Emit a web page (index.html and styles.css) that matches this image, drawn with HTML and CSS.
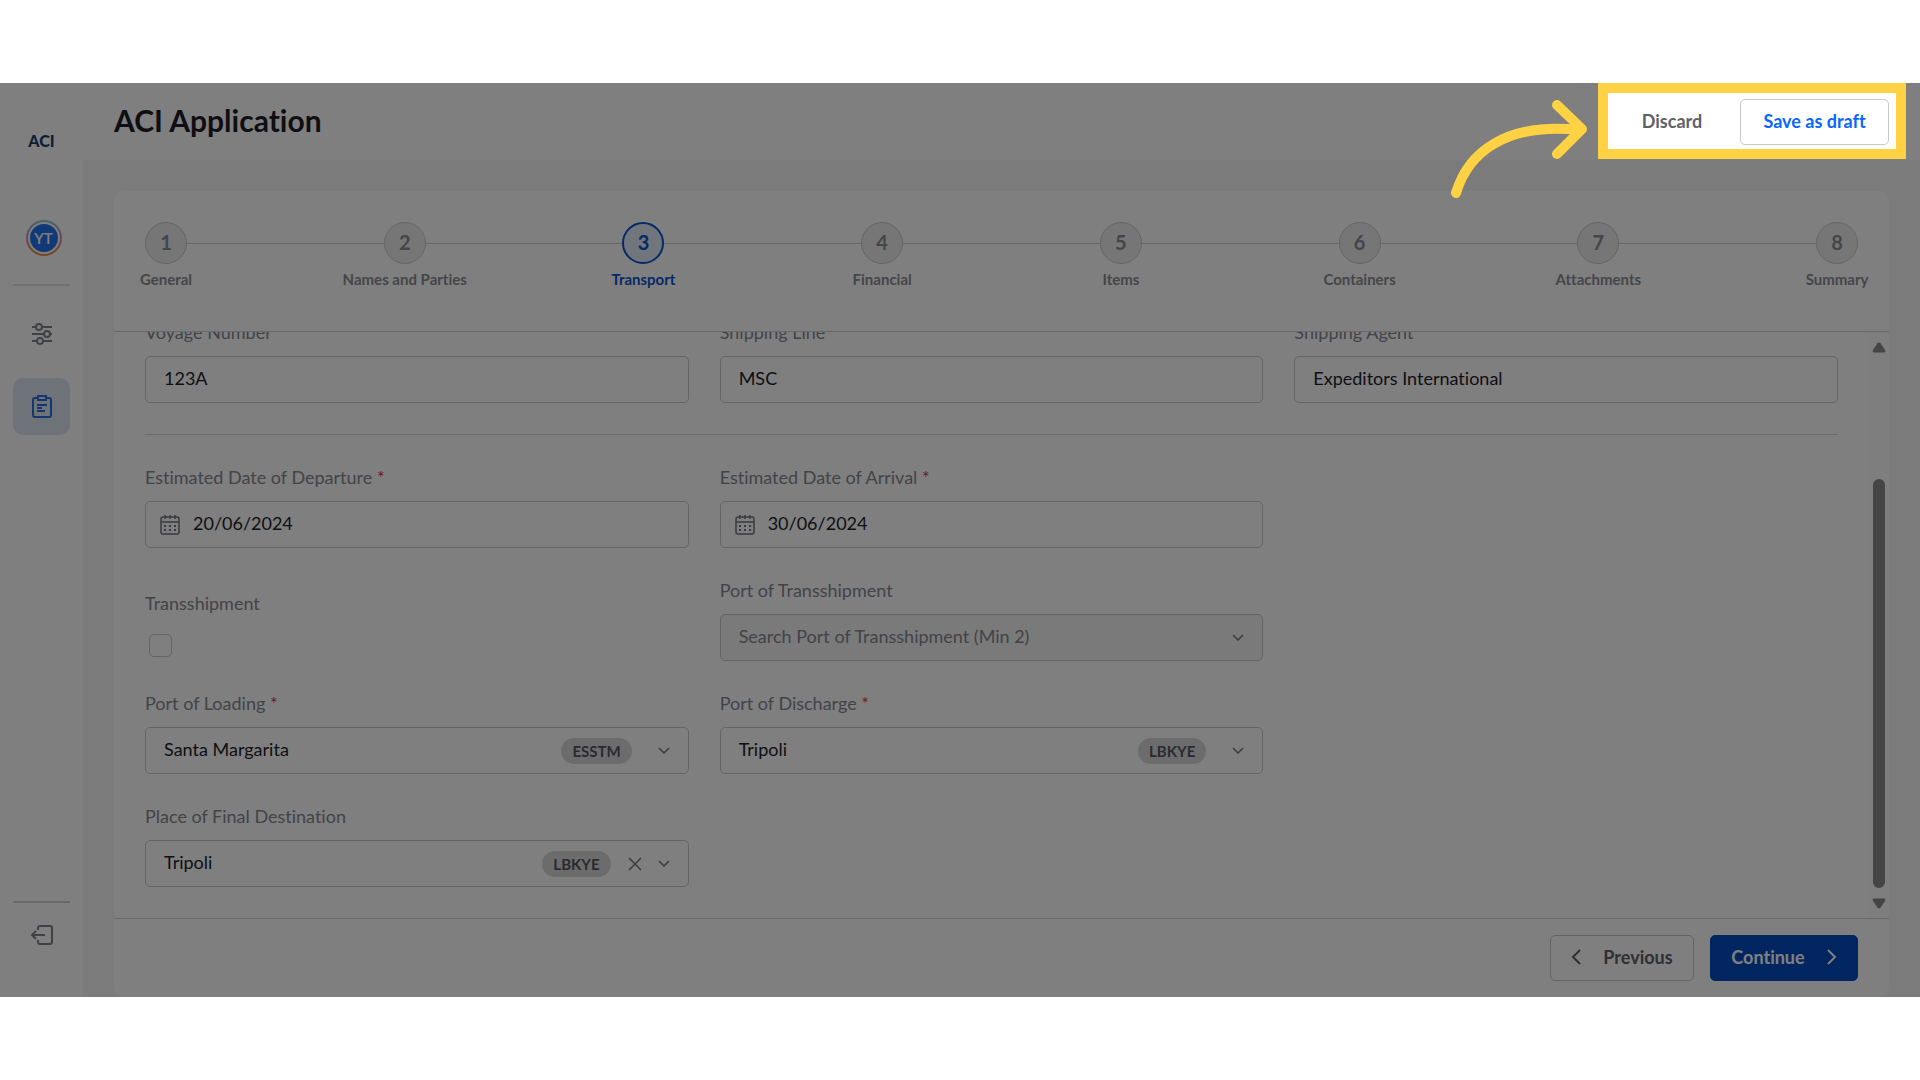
FILE: index.html
```
<!DOCTYPE html>
<html lang="en">
<head>
    <meta charset="utf-8">
    <title>ACI Application</title>
    <link rel="stylesheet" href="styles.css">
</head>
<body>
    <div class="app">
        <aside class="sidebar">
            <div class="logo">ACI</div>
            <button class="avatar" type="button"><span>YT</span></button>
            <hr class="side-line">
            <nav class="side-nav">
                <a href="#" class="side-link" aria-label="Settings">
                    <svg width="22" height="22" viewBox="0 0 22 22" fill="none" stroke="currentColor" stroke-width="2">
                        <path d="M1 4h4M11 4h10M1 11h12M19 11h2M1 18h5M12 18h9"/>
                        <circle cx="8" cy="4" r="3"/><circle cx="16" cy="11" r="3"/><circle cx="9" cy="18" r="3"/>
                    </svg>
                </a>
                <a href="#" class="side-link active" aria-label="Applications">
                    <svg width="20" height="24" viewBox="0 0 20 24" fill="none" stroke="currentColor" stroke-width="2">
                        <path d="M6 3H3a2 2 0 0 0-2 2v15a2 2 0 0 0 2 2h14a2 2 0 0 0 2-2V5a2 2 0 0 0-2-2h-3"/>
                        <path d="M6 1h8v4H6zM5 10h10M5 13h5M5 16h8"/>
                    </svg>
                </a>
            </nav>
            <hr class="side-line side-bottom">
            <a href="#" class="side-link logout" aria-label="Log out">
                <svg width="24" height="20" viewBox="0 0 24 20" fill="none" stroke="currentColor" stroke-width="2">
                    <path d="M8 5V3a2 2 0 0 1 2-2h10a2 2 0 0 1 2 2v14a2 2 0 0 1-2 2H10a2 2 0 0 1-2-2v-2"/>
                    <path d="M15 10H2M6 6l-4 4 4 4"/>
                </svg>
            </a>
        </aside>

        <main class="main">
            <header class="header">
                <h1>ACI Application</h1>
                <div class="header-actions">
                    <svg class="arrow" width="138" height="102" viewBox="0 0 138 102" fill="none" stroke="currentColor" stroke-width="10" stroke-linecap="round" stroke-linejoin="round">
                        <path d="M6 95C18 55 55 24 130 32"/>
                        <path d="M107 7l25 24-25 25"/>
                    </svg>
                    <button class="btn btn-text" type="button">Discard</button>
                    <button class="btn btn-draft" type="button">Save as draft</button>
                </div>
            </header>

            <section class="card">
                <ol class="steps">
                    <li class="step"><span class="circle">1</span><span class="step-name">General</span></li>
                    <li class="step"><span class="circle">2</span><span class="step-name">Names and Parties</span></li>
                    <li class="step current"><span class="circle">3</span><span class="step-name">Transport</span></li>
                    <li class="step"><span class="circle">4</span><span class="step-name">Financial</span></li>
                    <li class="step"><span class="circle">5</span><span class="step-name">Items</span></li>
                    <li class="step"><span class="circle">6</span><span class="step-name">Containers</span></li>
                    <li class="step"><span class="circle">7</span><span class="step-name">Attachments</span></li>
                    <li class="step"><span class="circle">8</span><span class="step-name">Summary</span></li>
                </ol>

                <div class="card-body">
                    <form class="form">
                        <div class="grid">
                            <div class="field">
                                <label for="voyage">Voyage Number</label>
                                <div class="control"><input id="voyage" type="text" value="123A"></div>
                            </div>
                            <div class="field">
                                <label for="line">Shipping Line</label>
                                <div class="control"><input id="line" type="text" value="MSC"></div>
                            </div>
                            <div class="field">
                                <label for="agent">Shipping Agent</label>
                                <div class="control"><input id="agent" type="text" value="Expeditors International"></div>
                            </div>
                        </div>

                        <hr class="form-line">

                        <div class="grid">
                            <div class="field">
                                <label for="etd">Estimated Date of Departure <b>*</b></label>
                                <div class="control control-date">
                                    <svg class="calendar" width="20" height="20" viewBox="0 0 20 20" fill="none" stroke="currentColor" stroke-width="1.5">
                                        <rect x="1" y="2" width="18" height="17" rx="2"/>
                                        <path d="M1 7h18M5 0v4M10 0v4M15 0v4"/>
                                        <path d="M4 11h12M4 15h12" stroke-width="2" stroke-dasharray="2 3"/>
                                    </svg>
                                    <input id="etd" type="text" value="20/06/2024">
                                </div>
                            </div>
                            <div class="field">
                                <label for="eta">Estimated Date of Arrival <b>*</b></label>
                                <div class="control control-date">
                                    <svg class="calendar" width="20" height="20" viewBox="0 0 20 20" fill="none" stroke="currentColor" stroke-width="1.5">
                                        <rect x="1" y="2" width="18" height="17" rx="2"/>
                                        <path d="M1 7h18M5 0v4M10 0v4M15 0v4"/>
                                        <path d="M4 11h12M4 15h12" stroke-width="2" stroke-dasharray="2 3"/>
                                    </svg>
                                    <input id="eta" type="text" value="30/06/2024">
                                </div>
                            </div>

                            <div class="field field-check new-row">
                                <label for="trans">Transshipment</label>
                                <input id="trans" type="checkbox">
                            </div>
                            <div class="field">
                                <label for="port-trans">Port of Transshipment</label>
                                <div class="control disabled">
                                    <input id="port-trans" type="text" placeholder="Search Port of Transshipment (Min 2)" disabled>
                                    <svg class="chevron" width="12" height="8" viewBox="0 0 12 8" fill="none" stroke="currentColor" stroke-width="1.5"><path d="M1 1l5 5 5-5"/></svg>
                                </div>
                            </div>

                            <div class="field new-row">
                                <label for="loading">Port of Loading <b>*</b></label>
                                <div class="control">
                                    <input id="loading" type="text" value="Santa Margarita">
                                    <span class="code">ESSTM</span>
                                    <svg class="chevron" width="12" height="8" viewBox="0 0 12 8" fill="none" stroke="currentColor" stroke-width="1.5"><path d="M1 1l5 5 5-5"/></svg>
                                </div>
                            </div>
                            <div class="field">
                                <label for="discharge">Port of Discharge <b>*</b></label>
                                <div class="control">
                                    <input id="discharge" type="text" value="Tripoli">
                                    <span class="code">LBKYE</span>
                                    <svg class="chevron" width="12" height="8" viewBox="0 0 12 8" fill="none" stroke="currentColor" stroke-width="1.5"><path d="M1 1l5 5 5-5"/></svg>
                                </div>
                            </div>

                            <div class="field new-row">
                                <label for="final">Place of Final Destination</label>
                                <div class="control">
                                    <input id="final" type="text" value="Tripoli">
                                    <span class="code code-clear">LBKYE</span>
                                    <button class="clear" type="button" aria-label="Clear">
                                        <svg width="14" height="14" viewBox="0 0 14 14" fill="none" stroke="currentColor" stroke-width="1.5"><path d="M1 1l12 12M13 1L1 13"/></svg>
                                    </button>
                                    <svg class="chevron" width="12" height="8" viewBox="0 0 12 8" fill="none" stroke="currentColor" stroke-width="1.5"><path d="M1 1l5 5 5-5"/></svg>
                                </div>
                            </div>
                        </div>
                    </form>

                    <div class="scrollbar">
                        <svg width="14" height="11" viewBox="0 0 14 11" fill="currentColor"><path d="M5.500 1.200Q7-.4 8.500 1.200L13 8Q14 10.500 12 10.500H2Q0 10.500 1 8z"/></svg>
                        <div class="scroll-track"><div class="scroll-thumb"></div></div>
                        <svg width="14" height="11" viewBox="0 0 14 11" fill="currentColor"><path d="M5.500 9.800Q7 11.400 8.500 9.800L13 3Q14 .5 12 .5H2Q0 .5 1 3z"/></svg>
                    </div>
                </div>

                <footer class="card-footer">
                    <button class="btn btn-prev" type="button">
                        <svg width="10" height="16" viewBox="0 0 10 16" fill="none" stroke="currentColor" stroke-width="2"><path d="M9 1L2 8l7 7"/></svg>
                        Previous
                    </button>
                    <button class="btn btn-next" type="button">
                        Continue
                        <svg width="10" height="16" viewBox="0 0 10 16" fill="none" stroke="currentColor" stroke-width="2"><path d="M1 1l7 7-7 7"/></svg>
                    </button>
                </footer>
            </section>
        </main>
    </div>
</body>
</html>
```
FILE: styles.css
```
* {
    box-sizing: border-box;
}

body {
    margin: 0;
    padding: 83px 0;
    height: 100vh;
    background: #fff;
    color: #1c1d29;
    font-family: Lato, "Liberation Sans", sans-serif;
    font-size: 18px;
    font-variant-ligatures: none;
}

button,
input {
    font: inherit;
    color: inherit;
}

.app {
    display: flex;
    height: 100%;
    overflow: hidden;
    background: #f6f6f6;
}

/* sidebar */
.sidebar {
    display: flex;
    flex-direction: column;
    align-items: center;
    width: 83px;
    padding: 47px 13px 30px;
    background: #fff;
}

.logo {
    color: #1b3a70;
    font-size: 16px;
    font-weight: 900;
    line-height: 22px;
}

.avatar {
    width: 36px;
    height: 36px;
    margin: 68px 0 28px 4px;
    padding: 2px;
    border: none;
    border-radius: 50%;
    background: linear-gradient(#7fd0e0, #d98ab0 50%, #f0903c);
}

.avatar span {
    display: block;
    border: 2px solid #fff;
    border-radius: 50%;
    background: #2373ee;
    color: #fff;
    font-size: 15px;
    font-weight: 600;
    line-height: 28px;
}

.side-line {
    width: 100%;
    height: 2px;
    margin: 0;
    border: none;
    background: #e4e5e7;
}

.side-nav {
    display: flex;
    flex-direction: column;
    gap: 16px;
    margin-top: 19px;
}

.side-link {
    display: flex;
    align-items: center;
    justify-content: center;
    width: 57px;
    height: 57px;
    border-radius: 10px;
    color: #80838c;
}

.side-link.active {
    background: #dde6f5;
    color: #2c6fdc;
}

.side-bottom {
    margin-top: auto;
    background: #d4d5d8;
}

.logout {
    height: 64px;
}

/* header */
.main {
    display: flex;
    flex: 1;
    flex-direction: column;
    min-width: 0;
}

.header {
    display: flex;
    justify-content: space-between;
    height: 77px;
    padding: 0 14px 0 31px;
    background: #fff;
}

.header h1 {
    margin: 0;
    font-size: 30px;
    font-weight: 700;
    line-height: 74px;
}

/* highlighted area, its shadow dims the rest of the app */
.header-actions {
    position: relative;
    z-index: 10;
    display: flex;
    align-items: center;
    justify-content: flex-end;
    gap: 14px;
    width: 308px;
    height: 76px;
    padding: 1px 7px 0 0;
    border: 10px solid #ffd243;
    background: #fff;
    box-shadow: 0 0 0 2400px rgba(0, 0, 0, 0.5);
}

.arrow {
    position: absolute;
    top: 5px;
    right: calc(100% + 20px);
    color: #ffd243;
}

.btn {
    display: flex;
    align-items: center;
    justify-content: center;
    height: 46px;
    padding: 0 6px 2px;
    border: 1px solid #c8c9cc;
    border-radius: 5px;
    background: #fff;
    color: #5f6168;
    font-weight: 700;
    white-space: nowrap;
    cursor: pointer;
}

.btn-text {
    width: 108px;
    border-color: transparent;
}

.btn-draft {
    width: 149px;
    color: #0a66ff;
}

/* card */
.card {
    display: flex;
    flex: 1;
    flex-direction: column;
    min-height: 0;
    margin: 31px 31px 0;
    border-radius: 10px;
    background: #fff;
}

.steps {
    display: flex;
    justify-content: space-between;
    margin: 0;
    padding: 31px 31px 42px;
    border-bottom: 1px solid #d2d3d6;
    list-style: none;
}

.step {
    display: flex;
    flex: 1;
    flex-direction: column;
    gap: 5px;
    color: #8a8c93;
    font-weight: 700;
}

.step:last-child {
    flex: none;
}

.circle {
    display: flex;
    align-items: center;
    justify-content: center;
    width: 42px;
    height: 42px;
    padding-bottom: 2px;
    border: 1px solid #ccc;
    border-radius: 50%;
    background: #ececec;
    font-size: 20px;
}

.step:not(:last-child) {
    background: linear-gradient(#ccc, #ccc) 42px 21px / 100% 1px no-repeat;
}

.step-name {
    display: flex;
    justify-content: center;
    width: 42px;
    font-size: 15px;
    line-height: 20px;
    white-space: nowrap;
}

.step.current {
    color: #0b54cc;
}

.step.current .circle {
    border: 2px solid #0b54cc;
    background: #e3ecfb;
}

.card-body {
    display: flex;
    flex: 1;
    min-height: 0;
    overflow: hidden;
}

.form {
    display: flex;
    flex: 1;
    flex-direction: column;
    justify-content: flex-end;
    padding: 0 31px;
    padding-bottom: 31px;
}

.grid {
    display: grid;
    grid-template-columns: repeat(3, 1fr);
    gap: 31px;
}

.new-row {
    grid-column-start: 1;
}

.field {
    display: flex;
    flex-direction: column;
    gap: 12px;
    min-width: 0;
}

.field label {
    color: #85878f;
    line-height: 23px;
}

.field b {
    color: #e0304a;
    font-weight: 400;
}

.control {
    display: flex;
    align-items: center;
    height: 47px;
    padding: 0 18px;
    border: 1px solid #c8c9cc;
    border-radius: 5px;
}

.control input {
    flex: 1;
    min-width: 0;
    padding: 0 0 3px;
    border: none;
    outline: none;
    background: none;
}

.control input::placeholder {
    color: #85878f;
}

.control.disabled {
    background: #f4f4f4;
}

.control-date {
    gap: 13px;
    padding-left: 14px;
}

.calendar,
.chevron,
.clear {
    color: #71747c;
}

.code {
    margin-right: 26px;
    padding: 0 11px;
    border-radius: 13px;
    background: #d9d9db;
    color: #55575e;
    font-size: 15px;
    font-weight: 700;
    line-height: 26px;
}

.code-clear {
    margin-right: 17px;
}

.clear {
    display: flex;
    margin-right: 16px;
    padding: 0;
    border: none;
    background: none;
}

.field-check {
    justify-content: flex-end;
    gap: 19px;
}

.field-check input {
    width: 23px;
    height: 23px;
    margin: 0 4px 4px;
    border: 1px solid #c8c9cc;
    border-radius: 5px;
    appearance: none;
}

.form-line {
    flex: none;
    width: 100%;
    height: 1px;
    margin: 31px 0;
    border: none;
    background: #d8d9dc;
}

.scrollbar {
    display: flex;
    flex-direction: column;
    align-items: center;
    gap: 10px;
    width: 20px;
    padding: 10px 0 9px;
    background: #fcfcfc;
    color: #8b8b8b;
}

.scroll-track {
    display: flex;
    flex: 1;
    align-items: flex-end;
}

.scroll-thumb {
    width: 12px;
    height: 78%;
    border-radius: 6px;
    background: #8b8b8b;
}

.card-footer {
    display: flex;
    justify-content: flex-end;
    gap: 16px;
    padding: 16px 31px;
    border-top: 1px solid #d2d3d6;
}

.btn-prev,
.btn-next {
    gap: 22px;
    min-width: 144px;
}

.btn-next {
    min-width: 148px;
    border-color: #004bc2;
    background: #004bc2;
    color: #fff;
}
```
